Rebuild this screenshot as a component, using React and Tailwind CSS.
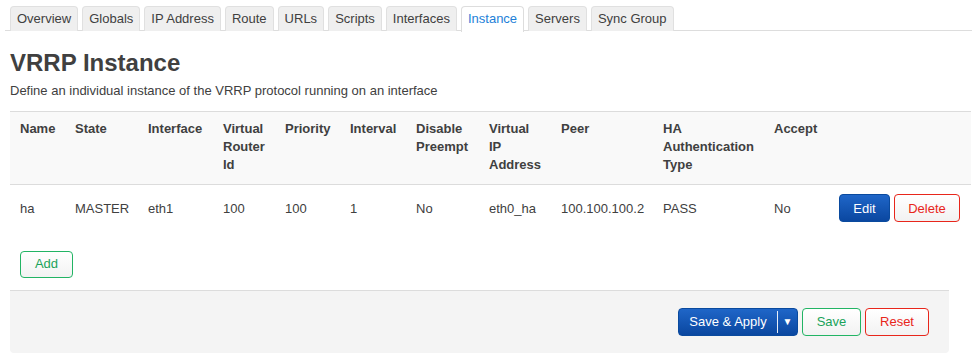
import React from "react";

const tabs = ["Overview", "Globals", "IP Address", "Route", "URLs", "Scripts", "Interfaces", "Instance", "Servers", "Sync Group"];

const cols = [
  { label: ["Name"], w: 55 },
  { label: ["State"], w: 73 },
  { label: ["Interface"], w: 75 },
  { label: ["Virtual", "Router", "Id"], w: 62 },
  { label: ["Priority"], w: 65 },
  { label: ["Interval"], w: 66 },
  { label: ["Disable", "Preempt"], w: 73 },
  { label: ["Virtual", "IP", "Address"], w: 72 },
  { label: ["Peer"], w: 102 },
  { label: ["HA", "Authentication", "Type"], w: 111 },
  { label: ["Accept"], w: 65 },
  { label: [""], w: 142 },
];

const row = ["ha", "MASTER", "eth1", "100", "100", "1", "No", "eth0_ha", "100.100.100.2", "PASS", "No"];

export default function App() {
  return (
    <div
      className="w-[977px] h-[363px] bg-white text-[13px] text-[#404040] overflow-hidden"
      style={{ fontFamily: '"Liberation Sans", Arial, sans-serif' }}
    >
      <div className="pt-[6px] pl-[5px]">
        <ul className="flex border-b border-[#ddd] h-[25px] pl-[5px] w-[967px]">
          {tabs.map((t) => {
            const active = t === "Instance";
            return (
              <li
                key={t}
                className={
                  "mr-[4px] h-[25px] px-[6px] leading-[23px] rounded-t-[4px] border border-b-0 " +
                  (active
                    ? "bg-white border-[#ddd] text-[#1e7fd8] h-[26px] -mb-px"
                    : "bg-[#efefef] border-[#e0e0e0] text-[#404040]")
                }
              >
                {t}
              </li>
            );
          })}
        </ul>
      </div>

      <div className="pl-[10px]">
        <h2 className="text-[24px] font-bold leading-[28px] mt-[18px] text-[#404040]">VRRP Instance</h2>
        <p className="mt-[5px] leading-[18px]">Define an individual instance of the VRRP protocol running on an interface</p>

        <table className="table-fixed w-[961px] mt-[11px] border-collapse">
          <colgroup>
            {cols.map((c, i) => (
              <col key={i} style={{ width: c.w }} />
            ))}
          </colgroup>
          <thead>
            <tr className="bg-[#f9f9f9] border-t border-b border-[#dcdcdc]">
              {cols.map((c, i) => (
                <th key={i} className="text-left align-top font-bold pl-[10px] pt-[8px] pb-[10px] leading-[18px]">
                  {c.label.map((l, j) => (
                    <div key={j}>{l}</div>
                  ))}
                </th>
              ))}
            </tr>
          </thead>
          <tbody>
            <tr>
              {row.map((v, i) => (
                <td key={i} className="pl-[10px] h-[47px] align-middle">
                  {v}
                </td>
              ))}
              <td className="pl-[10px] align-middle">
                <div className="flex gap-[4px]">
                  <button className="w-[51px] h-[28px] rounded-[4px] text-white bg-gradient-to-b from-[#1f66c8] to-[#0a47a0] border border-[#0a4a9e]">
                    Edit
                  </button>
                  <button className="w-[66px] h-[28px] rounded-[4px] text-[#e8261b] border border-[#e8261b] bg-gradient-to-b from-white to-[#f2f2f2]">
                    Delete
                  </button>
                </div>
              </td>
            </tr>
          </tbody>
        </table>

        <div className="pl-[10px] pt-[19px] pb-[12px] w-[939px]">
          <button className="w-[53px] h-[27px] rounded-[4px] text-[#1aa35a] border border-[#22b464] bg-gradient-to-b from-white to-[#f2f2f2]">
            Add
          </button>
        </div>

        <div className="w-[939px] h-[63px] bg-[#f4f4f4] border-t border-[#dcdcdc] rounded-b-[4px] flex justify-end items-start pt-[17px] pr-[20px] gap-[4px]">
          <div className="flex h-[28px] w-[120px] rounded-[4px] text-white bg-gradient-to-b from-[#1f66c8] to-[#0a47a0] border border-[#0a4a9e] overflow-hidden">
            <span className="flex-1 text-center leading-[26px]">Save &amp; Apply</span>
            <span className="w-px my-[2px] bg-white/90" />
            <span className="w-[19px] flex items-center justify-center text-[10px]">▼</span>
          </div>
          <button className="w-[59px] h-[28px] rounded-[4px] text-[#1aa35a] border border-[#22b464] bg-gradient-to-b from-white to-[#f2f2f2]">
            Save
          </button>
          <button className="w-[64px] h-[28px] rounded-[4px] text-[#e8261b] border border-[#e8261b] bg-gradient-to-b from-white to-[#f2f2f2]">
            Reset
          </button>
        </div>
      </div>
    </div>
  );
}
